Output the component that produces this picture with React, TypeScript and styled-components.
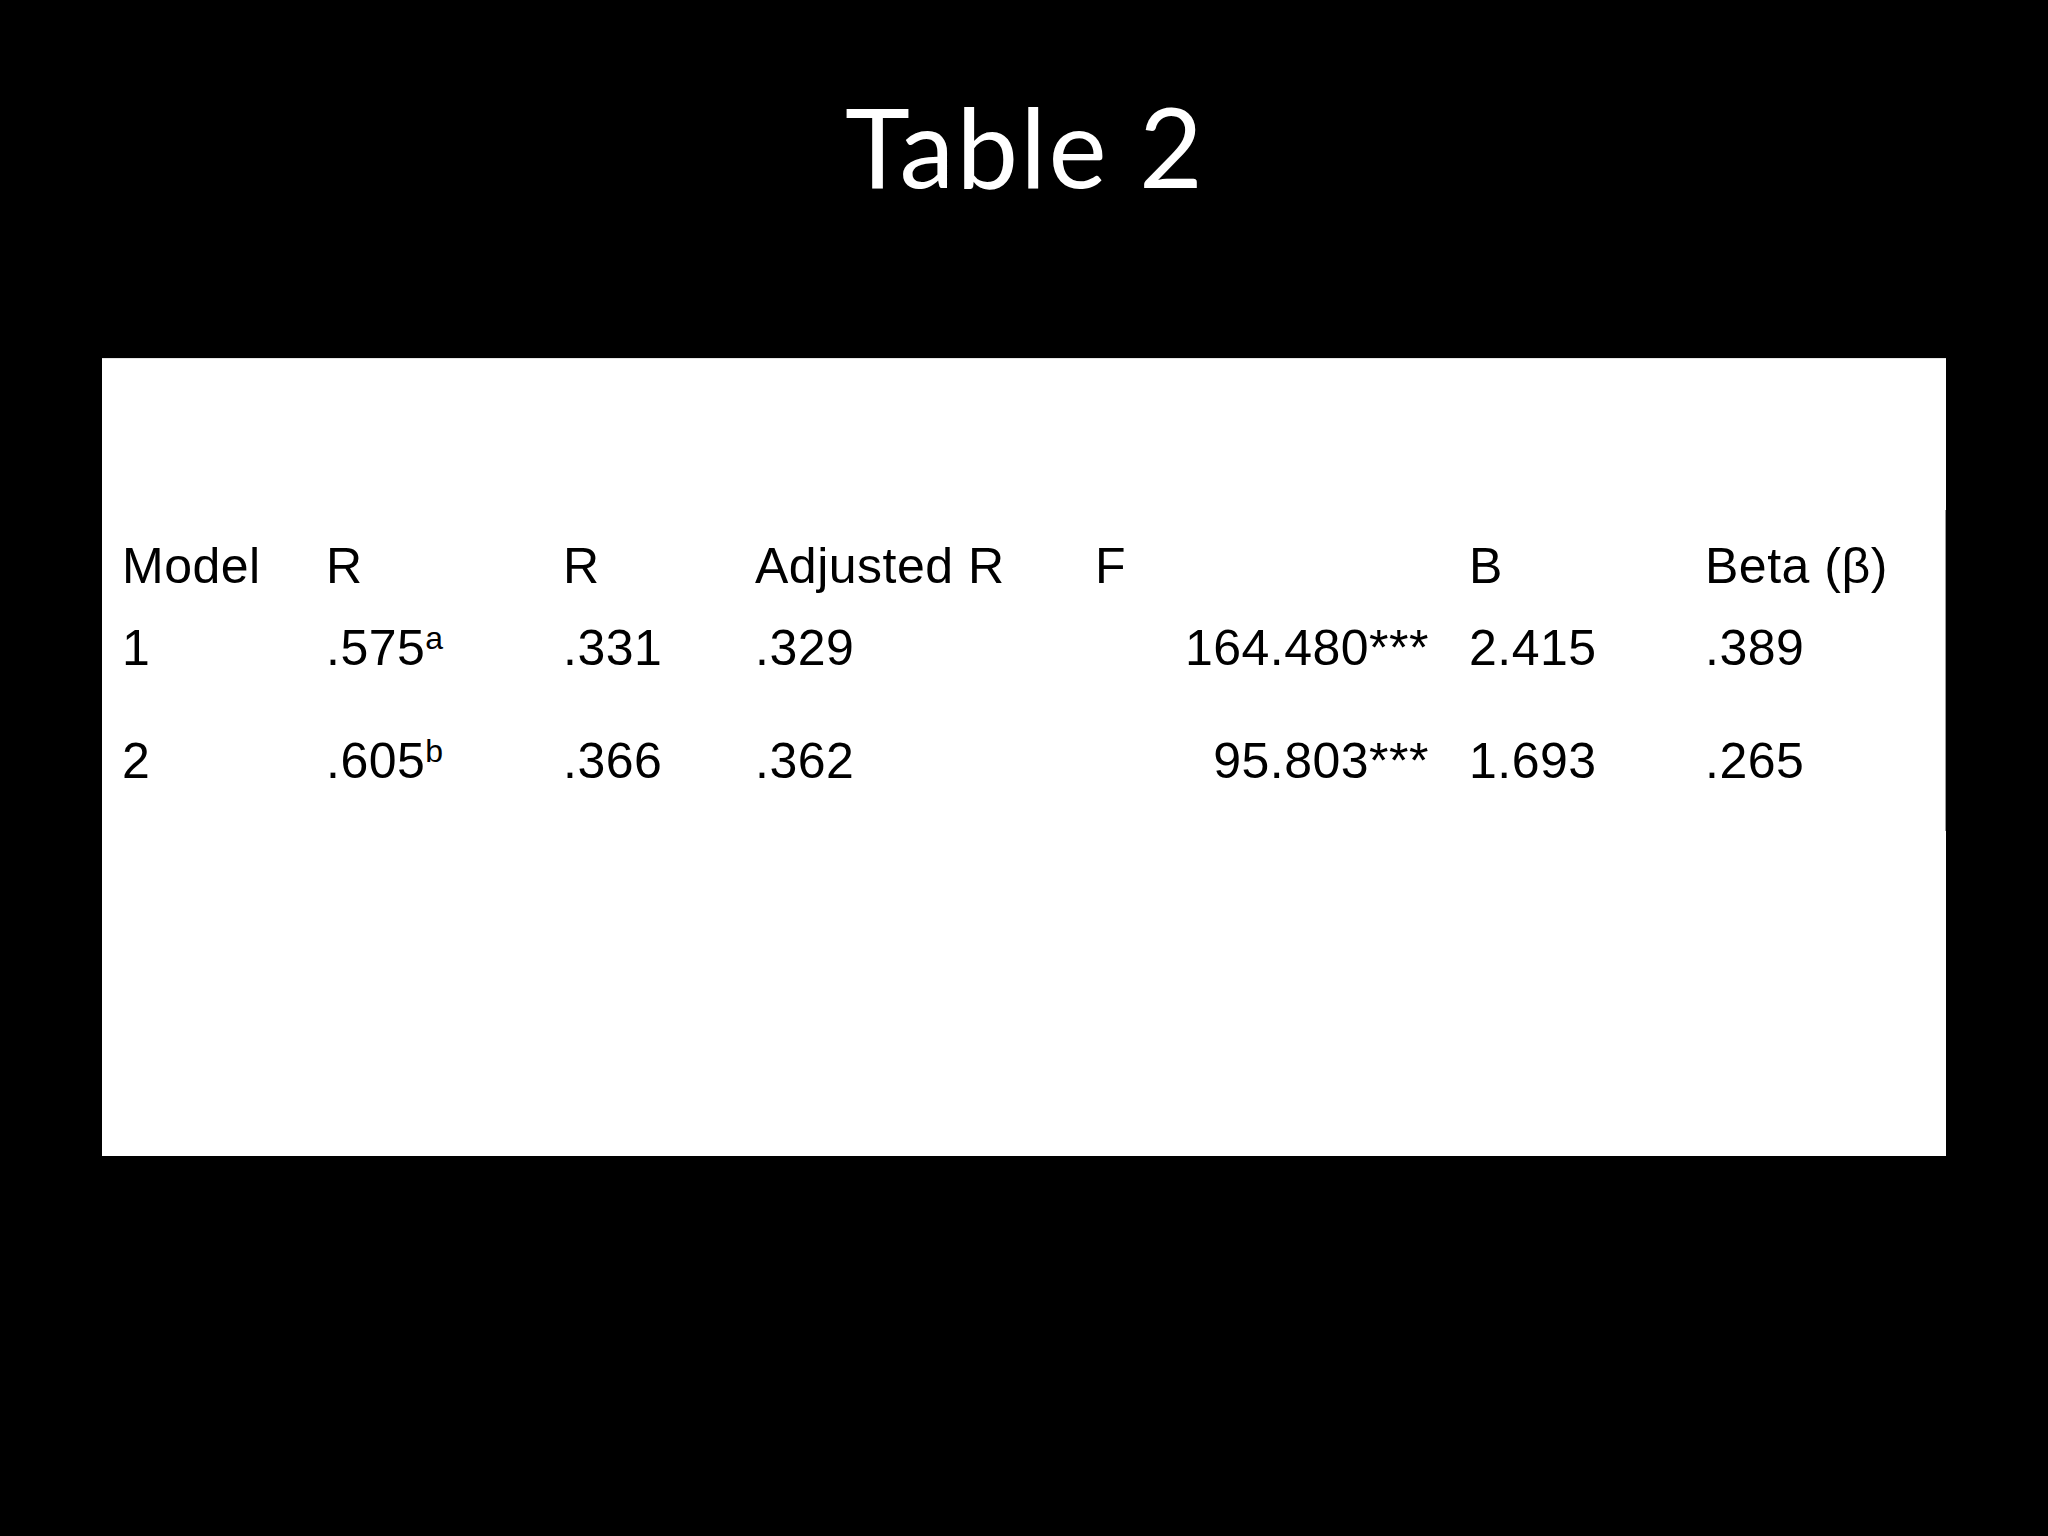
import * as React from "react";
import styled, { createGlobalStyle } from "styled-components";

interface Row {
	model: string;
	r: string;
	note: string;
	r2: string;
	adjusted: string;
	f: string;
	b: string;
	beta: string;
}

const rows: Row[] = [
	{ model: "1", r: ".575", note: "a", r2: ".331", adjusted: ".329", f: "164.480***", b: "2.415", beta: ".389" },
	{ model: "2", r: ".605", note: "b", r2: ".366", adjusted: ".362", f: "95.803***", b: "1.693", beta: ".265" },
];

const GlobalStyle = createGlobalStyle`
	html,
	body {
		margin: 0;
		padding: 0;
		background: #000;
	}
`;

const Slide = styled.div`
	width: 2048px;
	height: 1536px;
	background: #000;
	display: flex;
	flex-direction: column;
	overflow: hidden;
`;

const Title = styled.h1`
	margin: 0;
	box-sizing: border-box;
	height: 358px;
	padding-top: 79px;
	padding-left: 2px;
	font-family: Lato, "Open Sans", sans-serif;
	font-weight: 400;
	font-size: 110px;
	line-height: 132px;
	letter-spacing: 2.2px;
	color: #fff;
	text-align: center;
`;

const Panel = styled.div`
	position: relative;
	box-sizing: border-box;
	margin-left: 102px;
	width: 1844px;
	height: 798px;
	padding: 180px 0 0 20px;
	background: #fff;
	border-top: 1px solid #e4e4e4;

	// thin seam on the right edge of the pasted table
	&::after {
		content: "";
		position: absolute;
		right: 0;
		top: 151px;
		width: 1px;
		height: 321px;
		background: #9a9a9a;
	}
`;

const Grid = styled.div`
	display: grid;
	grid-template-columns: 204px 237px 192px 340px 374px 236px auto;
	grid-template-rows: 82px 113px 56px;
	font-family: "Liberation Sans", Arial, sans-serif;
	font-size: 50px;
	line-height: 56px;
	letter-spacing: 0.5px;
	color: #000;
	margin-top: -1px;
`;

const Cell = styled.div<{ $right?: boolean }>`
	white-space: nowrap;
	text-align: ${(props) => (props.$right ? "right" : "left")};
	padding-right: ${(props) => (props.$right ? "40px" : "0")};
`;

const Note = styled.sup`
	font-size: 32px;
	line-height: 0;
	letter-spacing: 0;
	vertical-align: 16px;
`;

export default function App() {
	return (
		<Slide>
			<GlobalStyle />
			<Title>Table 2</Title>
			<Panel>
				<Grid>
					<Cell>Model</Cell>
					<Cell>R</Cell>
					<Cell>R</Cell>
					<Cell>Adjusted R</Cell>
					<Cell>F</Cell>
					<Cell>B</Cell>
					<Cell>Beta (β)</Cell>
					{rows.map((row) => (
						<React.Fragment key={row.model}>
							<Cell>{row.model}</Cell>
							<Cell>
								{row.r}
								<Note>{row.note}</Note>
							</Cell>
							<Cell>{row.r2}</Cell>
							<Cell>{row.adjusted}</Cell>
							<Cell $right>{row.f}</Cell>
							<Cell>{row.b}</Cell>
							<Cell>{row.beta}</Cell>
						</React.Fragment>
					))}
				</Grid>
			</Panel>
		</Slide>
	);
}
